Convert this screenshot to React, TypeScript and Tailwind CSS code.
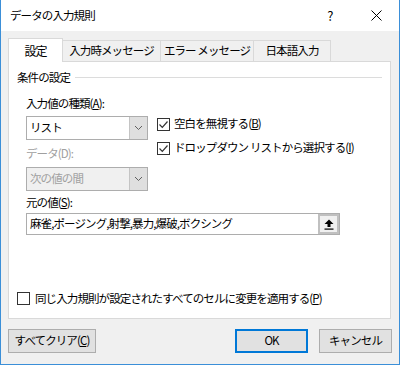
import React from "react";

const font = { fontFamily: '"Noto Sans CJK JP", "Noto Sans", sans-serif' };

function Check({ checked }: { checked: boolean }) {
  return (
    <span className="flex h-[13px] w-[13px] shrink-0 items-center justify-center border border-[#333] bg-white">
      {checked && (
        <svg width="11" height="11" viewBox="0 0 11 11">
          <path d="M1.5 5.5 L4.3 8.3 L9.5 2.5" fill="none" stroke="#333" strokeWidth="1.2" />
        </svg>
      )}
    </span>
  );
}

function Chevron() {
  return (
    <svg width="9" height="6" viewBox="0 0 9 6">
      <path d="M1 1 L4.5 4.5 L8 1" fill="none" stroke="#606060" strokeWidth="1" />
    </svg>
  );
}

function Combo({ value, disabled }: { value: string; disabled?: boolean }) {
  return (
    <div
      className={`flex h-[24px] w-[122px] border border-[#adadad] ${
        disabled ? "bg-[#f0f0f0] text-[#a0a0a0]" : "bg-white text-[#000]"
      }`}
    >
      <span className="flex flex-1 items-center pl-[3px]">{value}</span>
      <span className="flex w-[18px] items-center justify-center border-l border-[#c4c4c4] bg-[#dfdfdf]">
        <Chevron />
      </span>
    </div>
  );
}

function Button({ children, primary, className = "" }: { children: React.ReactNode; primary?: boolean; className?: string }) {
  return (
    <button
      className={`flex h-[24px] items-center justify-center whitespace-nowrap bg-[#e1e1e1] text-black ${
        primary ? "border-2 border-[#0078d7]" : "border border-[#adadad]"
      } ${className}`}
    >
      {children}
    </button>
  );
}

const tabs = ["入力時メッセージ", "エラー メッセージ", "日本語入力"];

export default function App() {
  return (
    <div
      style={font}
      className="flex h-[365px] w-[400px] flex-col whitespace-nowrap border border-t-0 border-[#3b8fd8] bg-[#f0f0f0] text-[11.5px] leading-none tracking-[-0.9px] text-black"
    >
      <div className="flex h-[31px] items-center justify-between bg-white pl-[9px]">
        <span>データの入力規則</span>
        <div className="flex items-center">
          <span className="w-[46px] text-center text-[13px]">?</span>
          <span className="flex w-[46px] items-center justify-center">
            <svg width="11" height="11" viewBox="0 0 11 11">
              <path d="M0.5 0.5 L10.5 10.5 M10.5 0.5 L0.5 10.5" stroke="#000" strokeWidth="1" />
            </svg>
          </span>
        </div>
      </div>

      <div className="flex flex-1 flex-col px-[7px] pt-[7px]">
        <div className="flex items-end">
          <div className="relative z-10 -mb-px flex h-[24px] w-[55px] items-center justify-center border border-b-0 border-[#d9d9d9] bg-white text-[12px]">
            設定
          </div>
          {tabs.map((t, i) => (
            <div
              key={t}
              className={`flex h-[21px] items-center justify-center border border-b-0 border-l-0 border-[#d9d9d9] bg-[#f0f0f0] ${
                i === 0 ? "w-[98px]" : i === 1 ? "w-[93px]" : "w-[77px]"
              }`}
            >
              {t}
            </div>
          ))}
        </div>

        <div className="flex h-[258px] w-[383px] flex-col border border-[#d9d9d9] bg-white px-[8px] pt-[10px]">
          <div className="flex items-center gap-[5px]">
            <span>条件の設定</span>
            <span className="h-px flex-1 bg-[#dcdcdc]" />
          </div>

          <div className="flex pl-[9px] pt-[14px]">
            <div className="flex flex-col">
              <span>
                入力値の種類(<span className="underline">A</span>):
              </span>
              <div className="mt-[7px]">
                <Combo value="リスト" />
              </div>
              <span className="mt-[8px] text-[#a0a0a0]">データ(D):</span>
              <div className="mt-[7px]">
                <Combo value="次の値の間" disabled />
              </div>
            </div>
            <div className="ml-[9px] flex flex-col gap-[11px] pt-[20px]">
              <label className="flex items-center gap-[4px]">
                <Check checked />
                <span>
                  空白を無視する(<span className="underline">B</span>)
                </span>
              </label>
              <label className="flex items-center gap-[4px]">
                <Check checked />
                <span>
                  ドロップダウン リストから選択する(<span className="underline">I</span>)
                </span>
              </label>
            </div>
          </div>

          <div className="flex flex-col pl-[9px] pt-[6px]">
            <span>
              元の値(<span className="underline">S</span>):
            </span>
            <div className="mt-[5px] flex h-[22px] w-[314px] border border-[#adadad] bg-white">
              <span className="flex flex-1 items-center pl-[3px]">麻雀,ポージング,射撃,暴力,爆破,ボクシング</span>
              <span className="flex w-[21px] items-center justify-center border-2 border-[#c0c0c0] bg-[#f0f0f0]">
                <svg width="10" height="11" viewBox="0 0 10 11">
                  <path d="M5 0.5 L9.5 5 L6.5 5 L6.5 8 L3.5 8 L3.5 5 L0.5 5 Z" fill="#000" />
                  <rect x="0.5" y="9.5" width="9" height="1.2" fill="#000" />
                </svg>
              </span>
            </div>
          </div>

          <div className="mt-auto mb-[13px] flex items-center gap-[5px]">
            <Check checked={false} />
            <span>
              同じ入力規則が設定されたすべてのセルに変更を適用する(<span className="underline">P</span>)
            </span>
          </div>
        </div>

        <div className="flex items-center pt-[10px]">
          <Button className="w-[88px]">
            すべてクリア(<span className="underline">C</span>)
          </Button>
          <Button primary className="ml-auto w-[73px]">
            OK
          </Button>
          <Button className="ml-[11px] w-[73px]">キャンセル</Button>
        </div>
      </div>
    </div>
  );
}
